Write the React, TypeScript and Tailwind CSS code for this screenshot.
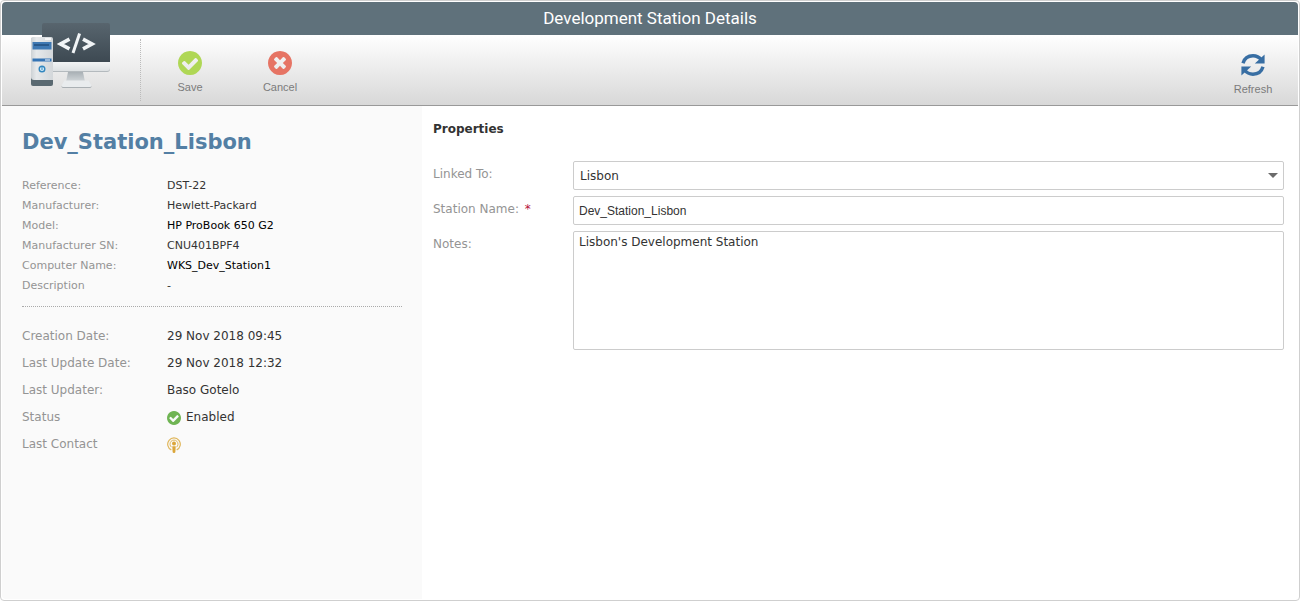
import { useState, type ReactNode } from 'react';

interface Detail {
  label: string;
  value: ReactNode;
  strong?: boolean;
}

function CheckCircleIcon({ className }: { className?: string }) {
  return (
    <svg viewBox="128 128 1536 1536" fill="currentColor" className={className} aria-hidden="true">
      <path d="M1412 734q0-28-18-46l-91-90q-19-19-45-19t-45 19l-408 407-226-226q-19-19-45-19t-45 19l-91 90q-18 18-18 46 0 27 18 45l362 362q19 19 45 19 27 0 46-19l543-543q18-18 18-45zm252 162q0 209-103 385.5t-279.5 279.5-385.5 103-385.5-103-279.5-279.5-103-385.5 103-385.5 279.5-279.5 385.5-103 385.5 103 279.5 279.5 103 385.5z" />
    </svg>
  );
}

function TimesCircleIcon({ className }: { className?: string }) {
  return (
    <svg viewBox="128 128 1536 1536" fill="currentColor" className={className} aria-hidden="true">
      <path d="M1277 1122q0-26-19-45l-181-181 181-181q19-19 19-45 0-27-19-46l-90-90q-19-19-46-19-26 0-45 19l-181 181-181-181q-19-19-45-19-27 0-46 19l-90 90q-19 19-19 46 0 26 19 45l181 181-181 181q-19 19-19 45 0 27 19 46l90 90q19 19 46 19 26 0 45-19l181-181 181 181q19 19 45 19 27 0 46-19l90-90q19-19 19-46zm387-226q0 209-103 385.5t-279.5 279.5-385.5 103-385.5-103-279.5-279.5-103-385.5 103-385.5 279.5-279.5 385.5-103 385.5 103 279.5 279.5 103 385.5z" />
    </svg>
  );
}

function RefreshIcon({ className }: { className?: string }) {
  return (
    <svg viewBox="0 0 24 24" className={className} aria-hidden="true">
      <g fill="none" stroke="currentColor" strokeWidth="3.4">
        <path d="M2 10.200C3.500 5.200 7.500 2.800 12 2.800c3.600 0 6.400 1.500 8.600 4.200" />
        <path d="M22 13.800C20.500 18.800 16.500 21.200 12 21.200c-3.600 0-6.400-1.500-8.600-4.200" />
      </g>
      <path d="M23.600 1.400v9h-9.800zM.4 22.600v-9h9.800z" fill="currentColor" />
    </svg>
  );
}

function AntennaIcon({ className }: { className?: string }) {
  return (
    <svg viewBox="0 0 14 16" className={className} aria-hidden="true">
      <g fill="none" stroke="#e0b75c">
        <path d="M4.300 12.900A6.300 6.300 0 1 1 9.700 12.900" strokeWidth="1.200" />
        <path d="M4.500 10.200A4 4 0 1 1 9.500 10.200" strokeWidth="1" />
      </g>
      <circle cx="7" cy="6.600" r="2" fill="#dba63a" />
      <path d="M5.300 9.200h3.400l-.3 5.600a1.400 1.200 0 0 1-2.800 0z" fill="#dba63a" />
    </svg>
  );
}

function StationIcon({ className }: { className?: string }) {
  return (
    <svg viewBox="0 0 82 68" className={className} aria-hidden="true">
      <defs>
        <linearGradient id="screen" x1="0" y1="0" x2="0" y2="1">
          <stop offset="0" stopColor="#58656e" />
          <stop offset="1" stopColor="#3d4952" />
        </linearGradient>
        <linearGradient id="bezel" x1="0" y1="0" x2="0" y2="1">
          <stop offset="0" stopColor="#f2f4f5" />
          <stop offset="1" stopColor="#dde1e3" />
        </linearGradient>
        <linearGradient id="stand" x1="0" y1="0" x2="0" y2="1">
          <stop offset="0" stopColor="#a9b0b5" />
          <stop offset="1" stopColor="#d3d8db" />
        </linearGradient>
        <linearGradient id="tower" x1="0" y1="0" x2="1" y2="0">
          <stop offset="0" stopColor="#cdd2d5" />
          <stop offset=".25" stopColor="#e6e9eb" />
          <stop offset="1" stopColor="#d3d7da" />
        </linearGradient>
      </defs>
      <path d="M38 49h15l2 10H36z" fill="url(#stand)" />
      <path d="M34 58.500h25l2 4a1.500 1.500 0 0 1-1.500 2.500h-26a1.500 1.500 0 0 1-1.500-2.500z" fill="#aab0b4" />
      <path d="M34 57.500h25l2 4a1.500 1.500 0 0 1-1.500 2.500h-26a1.500 1.500 0 0 1-1.500-2.500z" fill="#e9ecee" />
      <path d="M12 40h68v6a3 3 0 0 1-3 3H15a3 3 0 0 1-3-3z" fill="#b4babe" />
      <path d="M12 39h68v6a3 3 0 0 1-3 3H15a3 3 0 0 1-3-3z" fill="url(#bezel)" />
      <path d="M14 0h64a2 2 0 0 1 2 2v37H12V2a2 2 0 0 1 2-2z" fill="url(#screen)" />
      <g fill="none" stroke="#f1f4f6" strokeWidth="3.600">
        <path d="M39.500 16.200 30.500 21l9 4.800M53 16.200l9 4.800-9 4.800" />
        <path d="m49.600 10.500-6.600 19.500" strokeWidth="3" />
      </g>
      <rect x="1" y="15" width="22" height="48" rx="2" fill="#5a6971" />
      <path d="M3 14h18a2 2 0 0 1 2 2v41H4a3 3 0 0 1-3-3V16a2 2 0 0 1 2-2z" fill="url(#tower)" />
      <path d="M15 16h6" stroke="#fff" strokeWidth="1.500" />
      <rect x="2.500" y="19" width="19" height="7.500" fill="#3f79b3" />
      <path d="M4 22h15" stroke="#234f7e" strokeWidth="1.500" />
      <rect x="2.500" y="35.500" width="19" height="3" fill="#3474b5" />
      <path d="M15 37h5" stroke="#fff" />
      <circle cx="12" cy="46" r="2.800" fill="#d8eefa" stroke="#3287bf" strokeWidth="1.400" />
      <path d="M12 44v3" stroke="#3287bf" />
    </svg>
  );
}

const hardware: Detail[] = [
  { label: 'Reference:', value: 'DST-22' },
  { label: 'Manufacturer:', value: 'Hewlett-Packard' },
  { label: 'Model:', value: 'HP ProBook 650 G2', strong: true },
  { label: 'Manufacturer SN:', value: 'CNU401BPF4' },
  { label: 'Computer Name:', value: 'WKS_Dev_Station1', strong: true },
  { label: 'Description', value: '-' },
];

const activity: Detail[] = [
  { label: 'Creation Date:', value: '29 Nov 2018 09:45' },
  { label: 'Last Update Date:', value: '29 Nov 2018 12:32' },
  { label: 'Last Updater:', value: 'Baso Gotelo' },
  {
    label: 'Status',
    value: (
      <span className="flex items-center gap-[5px]">
        <CheckCircleIcon className="size-3.5 text-[#6fb453]" />
        Enabled
      </span>
    ),
  },
  { label: 'Last Contact', value: <AntennaIcon className="h-4 w-3.5" /> },
];

function ToolbarButton({ label, children }: { label: string; children: ReactNode }) {
  return (
    <button
      type="button"
      className="flex w-[90px] cursor-pointer flex-col items-center gap-1 font-['Liberation_Sans',sans-serif] text-[11px] leading-4 text-[#7b7b7b]"
    >
      {children}
      {label}
    </button>
  );
}

export default function App() {
  const [linkedTo, setLinkedTo] = useState('Lisbon');
  const [name, setName] = useState('Dev_Station_Lisbon');
  const [notes, setNotes] = useState("Lisbon's Development Station");

  return (
    <div className="flex min-h-screen flex-col rounded-sm border border-[#cfcfcf] bg-white p-px font-['DejaVu_Sans',sans-serif] text-[#333]">
      <header>
        <h1 className="rounded-t-sm bg-[#5f717b] text-center font-[Roboto,sans-serif] text-[17px] leading-[33px] text-white">
          Development Station Details
        </h1>
        <div className="flex items-start border-b border-[#999] bg-linear-to-b from-white to-[#d8d8d8] pb-1">
          <div className="mt-1 flex h-[62px] w-[139px] items-end border-r border-dotted border-[#bbb] pb-2.5 pl-7">
            <StationIcon className="relative h-[68px] w-[82px] shrink-0" />
          </div>
          <div className="flex flex-1 pt-4">
            <div className="flex pl-1">
              <ToolbarButton label="Save">
                <CheckCircleIcon className="size-6 text-[#afd755]" />
              </ToolbarButton>
              <ToolbarButton label="Cancel">
                <TimesCircleIcon className="size-6 text-[#e67464]" />
              </ToolbarButton>
            </div>
            <div className="ml-auto pt-0.5">
              <ToolbarButton label="Refresh">
                <RefreshIcon className="size-6 text-[#386ea3]" />
              </ToolbarButton>
            </div>
          </div>
        </div>
      </header>

      <div className="flex flex-1">
        <aside className="w-[420px] shrink-0 rounded-bl-sm bg-[#fafafa] px-5 pt-5">
          <h2 className="text-[21px] leading-8 font-bold text-[#537fa4]">{name}</h2>
          <dl className="mt-[18px] border-b border-dotted border-[#aaa] pb-2.5 text-[11px] leading-5">
            {hardware.map((item) => (
              <div key={item.label} className="flex">
                <dt className="w-[145px] text-[#949494]">{item.label}</dt>
                <dd className={item.strong ? 'text-black' : ''}>{item.value}</dd>
              </div>
            ))}
          </dl>
          <dl className="mt-4 text-xs leading-[27px]">
            {activity.map((item) => (
              <div key={item.label} className="flex h-[27px] items-center">
                <dt className="w-[145px] text-[#949494]">{item.label}</dt>
                <dd>{item.value}</dd>
              </div>
            ))}
          </dl>
        </aside>

        <main className="min-w-0 flex-1 pt-[15px] pr-3.5 pl-[11px] text-xs">
          <h3 className="leading-4 font-bold">Properties</h3>
          <form className="mt-6 flex flex-col gap-1.5" onSubmit={(e) => e.preventDefault()}>
            <div className="flex">
              <label htmlFor="linked-to" className="w-[140px] shrink-0 leading-[26px] text-[#949494]">
                Linked To:
              </label>
              <div className="relative flex-1">
                <select
                  id="linked-to"
                  value={linkedTo}
                  onChange={(e) => setLinkedTo(e.target.value)}
                  className="block h-[29px] w-full appearance-none rounded-xs border border-[#ccc] bg-white px-1.5"
                >
                  <option>Lisbon</option>
                  <option>Porto</option>
                </select>
                <svg
                  viewBox="0 0 10 5"
                  className="pointer-events-none absolute top-3 right-1.5 h-[5px] w-2.5 text-[#6b6b6b]"
                  aria-hidden="true"
                >
                  <path d="M0 0h10L5 5z" fill="currentColor" />
                </svg>
              </div>
            </div>
            <div className="flex">
              <label htmlFor="station-name" className="w-[140px] shrink-0 leading-[26px] text-[#949494]">
                Station Name: <span className="ml-0.5 text-[#b5123b]">*</span>
              </label>
              <input
                id="station-name"
                type="text"
                required
                value={name}
                onChange={(e) => setName(e.target.value)}
                className="h-[29px] min-w-0 flex-1 rounded-xs border border-[#ccc] px-[5px] font-['Liberation_Sans',sans-serif]"
              />
            </div>
            <div className="flex">
              <label htmlFor="notes" className="w-[140px] shrink-0 leading-[26px] text-[#949494]">
                Notes:
              </label>
              <textarea
                id="notes"
                value={notes}
                onChange={(e) => setNotes(e.target.value)}
                className="h-[119px] min-w-0 flex-1 resize-none rounded-xs border border-[#ccc] px-[5px] py-0.5 leading-4"
              />
            </div>
          </form>
        </main>
      </div>
    </div>
  );
}
